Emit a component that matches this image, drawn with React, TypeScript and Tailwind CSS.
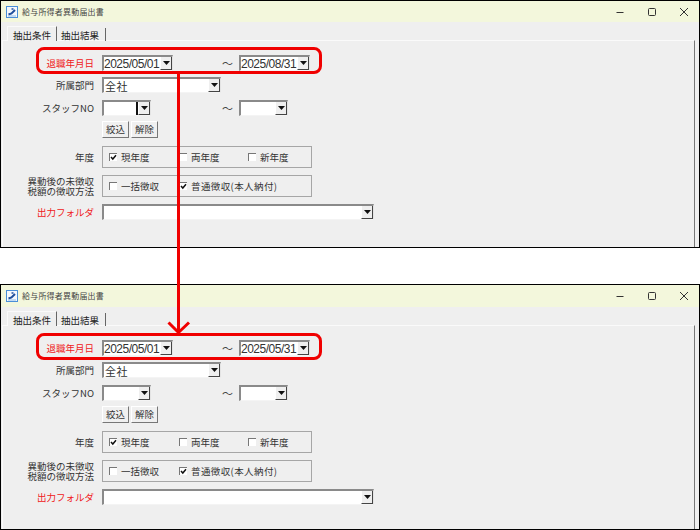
import React from 'react'

const jp = '[font-family:"Noto_Sans_CJK_JP","Liberation_Sans",sans-serif]'

function Combo({ value, width, tall, caret }: { value?: string; width: string; tall?: boolean; caret?: boolean }) {
  return (
    <div className={`${width} h-[16px] flex items-stretch bg-white border-t-2 border-l-2 border-t-[#8a8a8a] border-l-[#8a8a8a] border-r border-r-[#e4e4e4] border-b border-b-[#f4f4f4]`}>
      <div className={`flex-1 min-w-0 whitespace-nowrap leading-[14px] text-[#333] relative ${tall ? 'text-[11px] tracking-[0.5px] pl-px' : 'text-[12px] tracking-[-0.5px] [font-family:"Liberation_Sans",sans-serif]'}`}>
        {value}
        {caret && <span className="absolute right-0 top-0 w-[2px] h-[13px] bg-[#111]" />}
      </div>
      <div className="w-[12px] shrink-0 bg-[#efefef] border-r border-b border-r-[#444] border-b-[#444] border-l border-l-[#fff] flex items-center justify-center">
        <svg width="7" height="4" viewBox="0 0 7 4"><path d="M0 0h7L3.500 4z" fill="#111" /></svg>
      </div>
    </div>
  )
}

function Check({ label, checked, width, wide }: { label: string; checked?: boolean; width: string; wide?: boolean }) {
  return (
    <div className={`${width} flex items-center gap-[4px] text-[9.5px] text-[#333]`}>
      <div className="w-[8px] h-[8px] bg-white border-t border-l border-t-[#777] border-l-[#777] flex items-center justify-center">
        {checked && (
          <svg width="7" height="7" viewBox="0 0 7 7"><path d="M1 3l1.800 2L6 1.200" fill="none" stroke="#111" strokeWidth="1.500" /></svg>
        )}
      </div>
      <span className={wide ? 'tracking-[0.4px]' : ''}>{label}</span>
    </div>
  )
}

function Row({ label, red, children, h }: { label: React.ReactNode; red?: boolean; children: React.ReactNode; h: string }) {
  return (
    <div className={`flex items-center ${h}`}>
      <div className={`w-[91px] mr-[8px] text-right text-[9.5px] leading-[10px] ${red ? 'text-[#f02020]' : 'text-[#333]'}`}>{label}</div>
      {children}
    </div>
  )
}

function Group({ children }: { children: React.ReactNode }) {
  return <div className="w-[210px] h-[22px] border border-[#a6a6a6] flex items-center pl-[6px]">{children}</div>
}

function Btn({ label, width }: { label: string; width: string }) {
  return (
    <div className={`${width} h-[17px] flex items-center justify-center bg-[#f0f0f0] border border-t-[#fff] border-l-[#fff] border-r-[#777] border-b-[#777] text-[9.5px] text-[#333]`}>{label}</div>
  )
}

function Tilde() {
  return <div className="w-[66px] pl-[49px] text-[11px] leading-none text-[#444]">～</div>
}

function TitleIcon() {
  return (
    <svg width="12" height="12" viewBox="0 0 12 12" className="shrink-0">
      <rect x=".5" y=".5" width="11" height="11" fill="#f4f8fd" stroke="#4a8fd8" />
      <path d="M2.500 8.500l3-1 3.500-3.500" fill="none" stroke="#1f4f9c" strokeWidth="2" />
      <path d="M5.500 3h2" stroke="#1f4f9c" strokeWidth="1.500" />
      <path d="M2 10h8" stroke="#8fbce8" />
    </svg>
  )
}

function Win({ end, height, offset }: { end: string; height: string; offset: string }) {
  return (
    <div className={`${height} ${jp} border border-black bg-[#efefef] flex flex-col overflow-hidden`}>
      <div className={`${offset} shrink-0 bg-[#f3f7dc] flex items-center pl-[5px] pr-[10px] gap-[4px]`}>
        <TitleIcon />
        <span className="text-[8px] tracking-[0.2px] text-[#444]">給与所得者異動届出書</span>
        <div className="ml-auto flex items-center gap-[22px]">
          <svg width="10" height="10" viewBox="0 0 10 10"><path d="M1.500 5.500h7" stroke="#333" strokeWidth="1" /></svg>
          <svg width="10" height="10" viewBox="0 0 10 10"><rect x="1.500" y="1.500" width="7" height="7" rx="1" fill="none" stroke="#333" strokeWidth="1" /></svg>
          <svg width="10" height="10" viewBox="0 0 10 10"><path d="M1 1l8 8M9 1l-8 8" stroke="#333" strokeWidth="1" /></svg>
        </div>
      </div>
      <div className="h-[18px] shrink-0 flex items-end pl-[6px] text-[9.5px] text-[#222]">
        <div className="relative z-10 -mb-px w-[50px] h-[15px] pl-[5px] pt-[1px] leading-[14px] bg-[#efefef] border-t border-l border-t-[#fafafa] border-l-[#fafafa] border-r border-r-[#666]">抽出条件</div>
        <div className="relative z-10 -mb-px w-[48px] h-[13px] pl-[3px] ml-px leading-[14px] border-r border-r-[#666]">抽出結果</div>
      </div>
      <div className="flex-1 ml-px mr-[4px] border-t border-l border-r border-t-[#fafafa] border-l-[#fafafa] border-r-[#777] pt-[14px]">
        <Row label="退職年月日" red h="h-[16px]">
          <Combo value="2025/05/01" width="w-[71px]" />
          <Tilde />
          <Combo value={end} width="w-[71px]" />
        </Row>
        <Row label="所属部門" h="h-[16px] mt-[6px]">
          <Combo value="全社" width="w-[119px]" tall />
        </Row>
        <Row label="スタッフNO" h="h-[16px] mt-[7px]">
          <Combo width="w-[49px]" caret={height === 'h-[248px]'} />
          <div className="w-[22px]" />
          <Tilde />
          <Combo width="w-[49px]" />
        </Row>
        <Row label="" h="h-[17px] mt-[5px]">
          <div className="flex gap-[2px]">
            <Btn label="絞込" width="w-[27px]" />
            <Btn label="解除" width="w-[27px]" />
          </div>
        </Row>
        <Row label="年度" h="h-[22px] mt-[8px]">
          <Group>
            <Check label="現年度" checked width="w-[70px]" />
            <Check label="両年度" width="w-[69px]" />
            <Check label="新年度" width="w-[60px]" />
          </Group>
        </Row>
        <Row label={<>異動後の未徴収<br />税額の徴収方法</>} h="h-[22px] mt-[7px]">
          <Group>
            <Check label="一括徴収" width="w-[70px]" />
            <Check label="普通徴収(本人納付)" checked wide width="w-[130px]" />
          </Group>
        </Row>
        <Row label="出力フォルダ" red h="h-[16px] mt-[7px]">
          <Combo width="w-[272px]" />
        </Row>
      </div>
    </div>
  )
}

export default function App() {
  return (
    <div className="relative w-[700px] h-[530px] bg-white overflow-hidden">
      <Win end="2025/08/31" height="h-[248px]" offset="h-[21px]" />
      <div className="mt-[36px]">
        <Win end="2025/05/31" height="h-[246px]" offset="h-[22px]" />
      </div>
      {/* 赤枠と矢印は画面の上に重ねる注釈 */}
      <div className="absolute left-[36px] top-[47px] w-[286px] h-[27px] border-[3px] border-[#f00000] rounded-[8px]" />
      <div className="absolute left-[36px] top-[333px] w-[286px] h-[27px] border-[3px] border-[#f00000] rounded-[8px]" />
      <svg className="absolute left-[160px] top-[72px]" width="40" height="264" viewBox="0 0 40 264">
        <path d="M18.500 0V260" stroke="#f00000" strokeWidth="3" fill="none" />
        <path d="M8.500 250.500L18.500 260.500 L29 250.500" stroke="#f00000" strokeWidth="3" fill="none" />
      </svg>
    </div>
  )
}
